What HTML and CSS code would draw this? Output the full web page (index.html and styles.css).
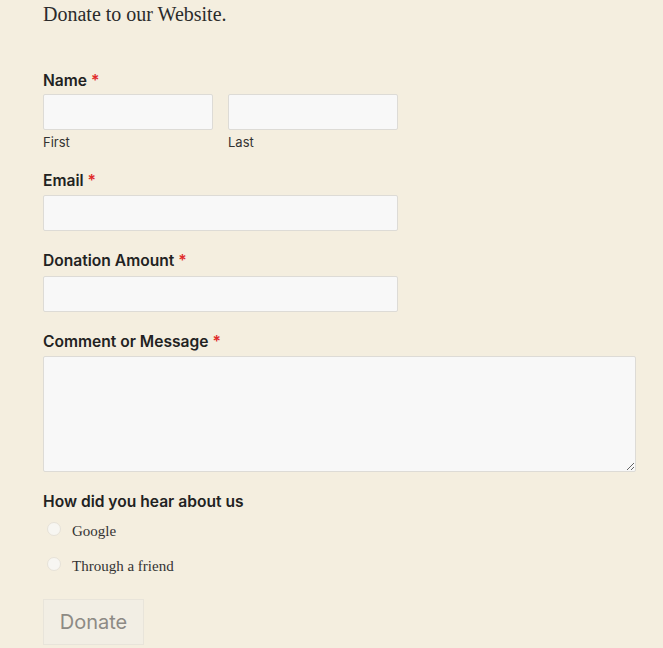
FILE: index.html
```html
<!DOCTYPE html>
<html>
<head>
<meta charset="utf-8">
<link rel="stylesheet" href="styles.css">
</head>
<body>
<main class="page">
  <p class="intro">Donate to our Website.</p>
  <form class="form">
    <div class="field field-name">
      <div class="label label-name">Name <span class="req">*</span></div>
      <div class="name-row">
        <div class="name-col">
          <input class="input" type="text">
          <div class="sub">First</div>
        </div>
        <div class="name-col">
          <input class="input" type="text">
          <div class="sub">Last</div>
        </div>
      </div>
    </div>
    <div class="field">
      <div class="label">Email <span class="req">*</span></div>
      <input class="input medium" type="text">
    </div>
    <div class="field">
      <div class="label">Donation Amount <span class="req">*</span></div>
      <input class="input medium" type="text">
    </div>
    <div class="field">
      <div class="label">Comment or Message <span class="req">*</span></div>
      <textarea class="input area"></textarea>
    </div>
    <div class="field field-radio">
      <div class="label">How did you hear about us</div>
      <label class="radio"><span class="dot"></span>Google</label>
      <label class="radio"><span class="dot"></span>Through a friend</label>
    </div>
    <button class="btn" type="button">Donate</button>
  </form>
</main>
</body>
</html>
```
FILE: styles.css
```css
html, body {
  margin: 0;
  padding: 0;
  background: #f4eedf;
}
.page {
  padding: 0 28px 0 43px;
}
.intro {
  margin: 0;
  padding-top: 2px;
  height: 68.5px;
  font-family: "Liberation Serif", serif;
  font-size: 20px;
  line-height: 24px;
  color: #2b2b2b;
}
.form {
  display: flex;
  flex-direction: column;
}
.field {
  margin-bottom: 20px;
}
.field-name {
  margin-bottom: 20.5px;
}
.label {
  font-family: Inter, sans-serif;
  font-weight: 600;
  font-size: 15.6px;
  line-height: 20px;
  color: #222;
  margin-bottom: 4.5px;
}
.label-name {
  margin-bottom: 3.5px;
}
.req {
  color: #e02b2b;
}
.name-row {
  display: flex;
  gap: 15px;
}
.name-col {
  width: 170px;
}
.input {
  display: block;
  box-sizing: border-box;
  width: 170px;
  height: 36px;
  margin: 0;
  border: 1px solid #dddbd6;
  border-radius: 2px;
  background: #f8f8f8;
  font: inherit;
}
.medium {
  width: 355px;
}
.area {
  width: 593px;
  height: 115.5px;
  resize: vertical;
}
.sub {
  font-family: Inter, sans-serif;
  font-size: 13px;
  line-height: 16px;
  color: #333;
  margin-top: 4px;
}
.field-radio {
  margin-bottom: 0;
}
.radio {
  display: flex;
  align-items: center;
  height: 20px;
  font-family: "Liberation Serif", serif;
  font-size: 15px;
  line-height: 20px;
  color: #333;
  margin-top: 9px;
}
.radio + .radio {
  margin-top: 15px;
}
.dot {
  box-sizing: border-box;
  width: 14px;
  height: 14px;
  border-radius: 50%;
  background: #f7f6f2;
  border: 1px solid #e6e2d8;
  margin: 0 11px 0 4px;
  position: relative;
  top: -1.5px;
}
.btn {
  align-self: flex-start;
  box-sizing: border-box;
  width: 101px;
  height: 46px;
  margin-top: 23px;
  border: 1px solid #e8e4da;
  border-radius: 0;
  background: #f2eee4;
  font-family: Inter, sans-serif;
  font-size: 20px;
  color: #8d8a84;
  padding: 0;
}
```
